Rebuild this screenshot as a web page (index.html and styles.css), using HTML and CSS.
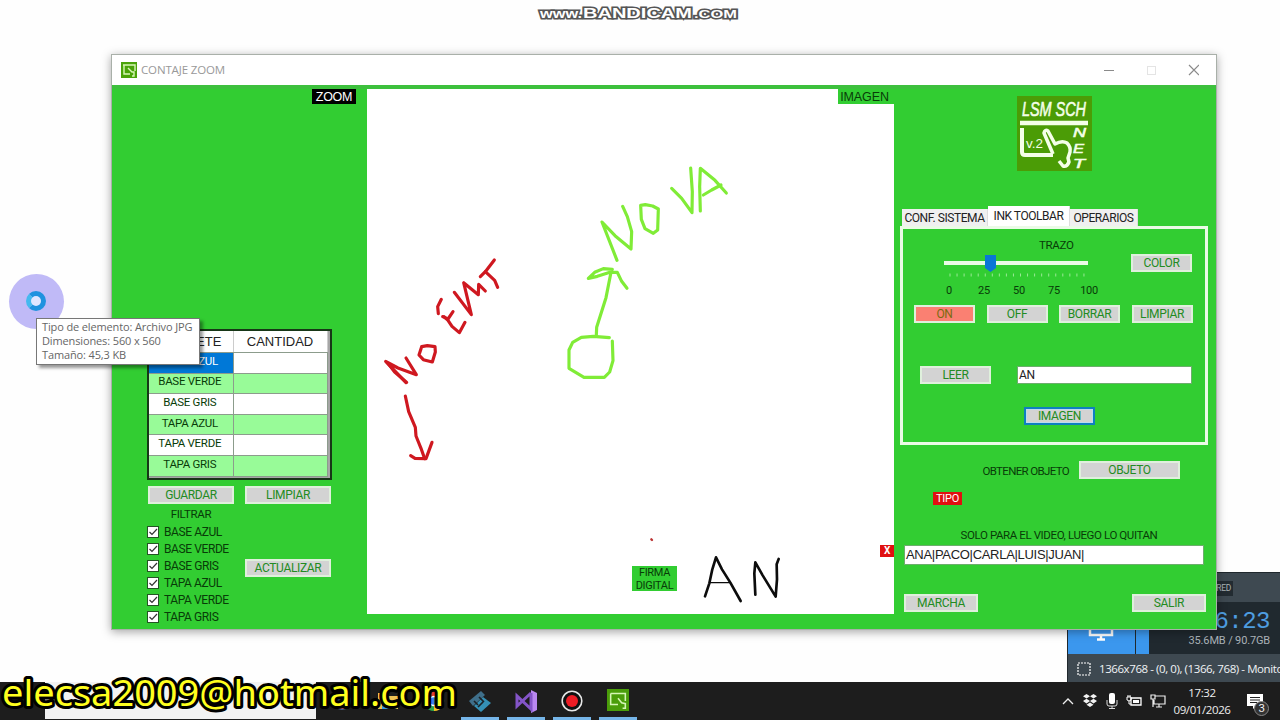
FILE: index.html
```html
<!DOCTYPE html>
<html lang="es">
<head>
  <meta charset="UTF-8" />
  <meta name="viewport" content="width=device-width, initial-scale=1.0" />
  <title>CONTAJE ZOOM</title>
  <link rel="stylesheet" href="styles.css">
</head>
<body>
  <div class="desktop">

    <svg class="watermark" width="210" height="26">
      <text x="5" y="18" font-size="13" textLength="42" lengthAdjust="spacingAndGlyphs">www.</text>
      <text x="48" y="18" font-size="15" textLength="109" lengthAdjust="spacingAndGlyphs">BANDICAM</text>
      <text x="159" y="18" font-size="11.5" textLength="43" lengthAdjust="spacingAndGlyphs">.COM</text>
    </svg>

    <!-- grabador -->
    <div class="recorder">
      <div class="rec-top"><span class="rec-badge">SHARED</span></div>
      <div class="rec-main">
        <div class="rec-blue">
          <svg width="28" height="20"><path d="M3 0v9h22V0M14 9v5M10 13.500h8" fill="none" stroke="#fff" stroke-width="2.500"/></svg>
        </div>
        <div class="rec-drop"></div>
        <div class="rec-info">
          <div class="rec-time">06:23</div>
          <div class="rec-size">35.6MB / 90.7GB</div>
        </div>
      </div>
      <div class="rec-status">
        <svg width="14" height="14"><rect x="1" y="1" width="12" height="12" fill="none" stroke="#fff" stroke-width="1.2" stroke-dasharray="2 1"/></svg>
        <span>1366x768 - (0, 0), (1366, 768) - Monitor</span>
      </div>
    </div>

    <div class="window">
      <div class="titlebar">
        <svg class="app-icon" width="16" height="16" viewBox="0 0 16 16">
          <rect width="16" height="16" fill="#4aa30a"/>
          <path d="M2 3h12v6M3 3v9h6M7 6l4 4h2v4h-2" fill="none" stroke="#d9f7b8" stroke-width="1.4"/>
        </svg>
        <span class="title">CONTAJE ZOOM</span>
        <svg class="controls" width="96" height="14" viewBox="0 0 96 14">
          <path d="M1 7.500h10" stroke="#8a8a8a"/>
          <rect x="44.5" y="3.500" width="8" height="8" fill="none" stroke="#e4e4e4"/>
          <path d="M86 2l10 10M96 2l-10 10" stroke="#8a8a8a" stroke-width="1.2"/>
        </svg>
      </div>

      <div class="content">
        <div class="left">
          <div class="zoom-tag">ZOOM</div>
          <div class="grid-box">
            <table class="grid">
              <tr><th>PAQUETE</th><th>CANTIDAD</th></tr>
              <tr><td class="selected">BASE AZUL</td><td></td></tr>
              <tr class="alt"><td>BASE VERDE</td><td></td></tr>
              <tr><td>BASE GRIS</td><td></td></tr>
              <tr class="alt"><td>TAPA AZUL</td><td></td></tr>
              <tr><td>TAPA VERDE</td><td></td></tr>
              <tr class="alt"><td>TAPA GRIS</td><td></td></tr>
            </table>
          </div>
          <div class="btn-row">
            <button>GUARDAR</button>
            <button>LIMPIAR</button>
          </div>
          <div class="filters">
            <div class="filter-list">
              <div class="filter-title">FILTRAR</div>
              <label><i class="check"><svg width="12" height="12"><path d="M2.5 6l2.5 2.5L10 3"/></svg></i>BASE AZUL</label>
              <label><i class="check"><svg width="12" height="12"><path d="M2.5 6l2.5 2.5L10 3"/></svg></i>BASE VERDE</label>
              <label><i class="check"><svg width="12" height="12"><path d="M2.5 6l2.5 2.5L10 3"/></svg></i>BASE GRIS</label>
              <label><i class="check"><svg width="12" height="12"><path d="M2.5 6l2.5 2.5L10 3"/></svg></i>TAPA AZUL</label>
              <label><i class="check"><svg width="12" height="12"><path d="M2.5 6l2.5 2.5L10 3"/></svg></i>TAPA VERDE</label>
              <label><i class="check"><svg width="12" height="12"><path d="M2.5 6l2.5 2.5L10 3"/></svg></i>TAPA GRIS</label>
            </div>
            <button>ACTUALIZAR</button>
          </div>
        </div>

        <div class="canvas">
          <!-- trazos a mano -->
          <svg class="ink" width="527" height="525">
            <g transform="translate(3 61) scale(.33333)">
              <g stroke="#cf1820" stroke-width="9.5">
                <polyline points="108,698 47,634 84,654 139,674 108,624"/>
                <polyline points="110,697 74,666 54,640"/>
                <polyline points="155,590 147,615 160,629 187,636 196,606 195,590 172,587 155,590"/>
                <polyline points="214,448 203,470 205,491"/>
                <polyline points="218,500 234,507 249,485"/>
                <polyline points="222,500 234,511 246,529 268,548 285,517"/>
                <polyline points="253,427 304,494 281,398 325,434 326,403 346,423"/>
                <polyline points="331,380 346,365 373,330"/>
                <polyline points="346,365 374,391 383,412"/>
                <polyline points="106,738 116,785 136,832 138,858 153,895 164,926"/>
                <polyline points="122,917 135,925 168,926 186,877"/>
              </g>
              <g stroke="#80ec37" stroke-width="9.5">
                <polyline points="741,331 696,216 735,257 783,297 785,245 772,200 758,169"/>
                <polyline points="826,164 812,166 814,208 825,236 850,250 863,240 865,177 848,168 826,164"/>
                <polyline points="905,115 935,145 966,188 967,125 962,54"/>
                <polyline points="991,183 989,110 991,55 1035,91 1069,129"/>
                <polyline points="1000,135 1025,120 1053,105"/>
                <polyline points="679,555 680,532 708,443 722,372"/>
                <polyline points="727,358 700,356 674,367 655,385 682,379 720,367 742,367 755,394 771,415"/>
                <polyline points="718,563 670,559 634,562 608,577 597,600 597,655 642,682 703,682 719,666 729,632 727,573"/>
              </g>
            </g>
            <g transform="translate(233 431) scale(.33333)" stroke="#0c0c0c" stroke-width="8">
              <polyline points="315,229 328,190 337,148 348,112 366,148 391,188 422,243"/>
              <polyline points="330,188 391,188" stroke-width="4"/>
              <polyline points="466,224 463,160 466,127 488,166 527,230 531,178 530,133 536,117"/>
              <polyline points="154,58 156,60" stroke="#b33" stroke-width="7"/>
            </g>
          </svg>
          <span class="image-tag">IMAGEN</span>
          <span class="sign-tag">FIRMA<br>DIGITAL</span>
          <span class="close-tag">X</span>
        </div>

        <div class="right">
          <svg class="logo" width="75" height="75" viewBox="0 0 75 75">
            <rect width="75" height="75" fill="#4b9c06" stroke="none"/>
            <text x="5" y="20" font-size="21" font-style="italic" class="logo-name" textLength="64" lengthAdjust="spacingAndGlyphs">LSM SCH</text>
            <path d="M3 27h68" stroke-width="4.5"/>
            <path d="M5 32v24q0 3 3 3h28" stroke-width="4"/>
            <path d="M36 58L27 37q1-4 4-2l7 13q7-4 12-1 4 4 3 9l-2 6 1 4q-2 5-6 4l-4-5" stroke-width="3.500" stroke-linejoin="round"/>
            <text x="9" y="52" font-size="12" textLength="17" lengthAdjust="spacingAndGlyphs">v.2</text>
            <g font-size="13" font-style="italic" class="logo-name">
              <text x="56" y="41" textLength="13" lengthAdjust="spacingAndGlyphs">N</text>
              <text x="56" y="57" textLength="11" lengthAdjust="spacingAndGlyphs">E</text>
              <text x="56" y="72" textLength="12" lengthAdjust="spacingAndGlyphs">T</text>
            </g>
          </svg>

          <div class="tabs">
            <span class="tab t1">CONF. SISTEMA</span>
            <span class="tab t2 active">INK TOOLBAR</span>
            <span class="tab t3">OPERARIOS</span>
          </div>
          <div class="tab-panel">
            <div class="stroke-row">
              <div class="slider">
                <div class="slider-title">TRAZO</div>
                <svg width="146" height="26">
                  <rect x="1" y="8" width="144" height="4" fill="#eafbe6"/>
                  <path d="M42 2h11v13l-5.500 4-5.500-4z" fill="#0a76d6"/>
                  <path d="M6.500 22h135" stroke="#9ae895" stroke-width="3" stroke-dasharray="1 6.050"/>
                </svg>
                <div class="scale"><span>0</span><span>25</span><span>50</span><span>75</span><span>100</span></div>
              </div>
              <button>COLOR</button>
            </div>
            <div class="tools">
              <button class="on">ON</button>
              <button>OFF</button>
              <button>BORRAR</button>
              <button>LIMPIAR</button>
            </div>
            <div class="read-row">
              <button>LEER</button>
              <div class="field">AN</div>
            </div>
            <button class="focus">IMAGEN</button>
          </div>

          <div class="object-row">
            <span>OBTENER OBJETO</span>
            <button>OBJETO</button>
          </div>
          <div class="type-tag">TIPO</div>
          <div class="note">SOLO PARA EL VIDEO, LUEGO LO QUITAN</div>
          <div class="field names">ANA|PACO|CARLA|LUIS|JUAN|</div>
          <div class="bottom-row">
            <button>MARCHA</button>
            <button>SALIR</button>
          </div>
        </div>
      </div>
    </div>

    <!-- cursor ocupado -->
    <div class="cursor"><div class="ring"></div></div>
    <div class="tooltip">Tipo de elemento: Archivo JPG<br>Dimensiones: 560 x 560<br>Tamaño: 45,3 KB</div>

    <div class="taskbar">
      <div class="search"></div>
      <div class="apps">
        <div class="app">
          <svg width="24" height="24" viewBox="0 0 24 24"><circle cx="12" cy="12" r="9" fill="#456aa0"/><path d="M4 15a9 9 0 0 0 16 0z" fill="#d8546a"/></svg>
        </div>
        <div class="app">
          <svg width="24" height="24" viewBox="0 0 24 24"><path d="M2 4h8l2 3h10v13H2z" fill="#f0c254"/><path d="M6 14h12v6H6z" fill="#3c9be0"/></svg>
        </div>
        <div class="app">
          <svg width="24" height="24" viewBox="0 0 24 24"><path d="M12 12L3.300 7a10 10 0 0 1 17.400 0z" fill="#e33b2e"/><path d="M12 12L3.300 7A10 10 0 0 0 12 22z" fill="#2fa84f"/><path d="M12 12l8.700-5A10 10 0 0 1 12 22z" fill="#f9c526"/><circle cx="12" cy="12" r="4.500" fill="#3b7ded" stroke="#fff" stroke-width="1.500"/></svg>
        </div>
        <div class="app open">
          <svg width="24" height="24" viewBox="0 0 24 24"><path d="M13 2l4 4-12 11-4-5z" fill="#3f6f8a"/><path d="M15 8l8 6-10 9-7-6z" fill="#3590b5"/><path d="M6 12l4 4M11 8l5 5M10 18l5-5" stroke="#1c2226" stroke-width="1.700"/></svg>
        </div>
        <div class="app open">
          <svg width="24" height="24" viewBox="0 0 24 24"><path d="M17 1l6 3v17l-6 3z" fill="#b987f0"/><path d="M17 4v16L3 7v10L17 4" fill="none" stroke="#8455c8" stroke-width="3"/></svg>
        </div>
        <div class="app open">
          <svg width="24" height="24" viewBox="0 0 24 24"><circle cx="12" cy="12" r="9.800" fill="#111" stroke="#e8e8e8" stroke-width="1.600"/><circle cx="12" cy="12" r="6" fill="#ee1c24"/></svg>
        </div>
        <div class="app open">
          <svg width="24" height="22" viewBox="0 0 24 24"><rect width="24" height="24" fill="#4a9d0a"/><path d="M4 5h16v8M4 5v12h8M12 10l4 5 4 1v5h-3" fill="none" stroke="#d5f5b5" stroke-width="1.700"/></svg>
        </div>
      </div>
      <div class="tray">
        <svg width="12" height="14"><path d="M1 10l5-5 5 5" fill="none" stroke="#eee" stroke-width="1.300"/></svg>
        <svg width="16" height="14" viewBox="0 0 16 14"><path d="M4.500 0L8 2.300 4.500 4.600 1 2.300zM11.500 0L15 2.300l-3.500 2.300L8 2.300zM4.500 4.800L8 7.100 4.500 9.400 1 7.100zM11.500 4.800L15 7.100l-3.500 2.300L8 7.100zM8 8.500l3.500 2.200L8 13l-3.500-2.300z" fill="#f2f2f2"/></svg>
        <svg width="12" height="16" viewBox="0 0 12 16"><rect x="3" width="6" height="11" rx="2" fill="#fff"/><path d="M1 7v4q0 2 2 2h6q2 0 2-2V7M6 13v3M3 15.500h6" fill="none" stroke="#ddd"/></svg>
        <svg width="16" height="14" viewBox="0 0 16 14"><path d="M5 4h10v7H5z" fill="none" stroke="#fff" stroke-width="1.300"/><path d="M7 6h6v3H7z" fill="#fff"/><path d="M1 3h4v3q-2 2-4 0zM2 3V1M4 3V1M3 7v3h2" fill="none" stroke="#fff"/></svg>
        <svg width="16" height="14" viewBox="0 0 16 14"><path d="M5 2h10v8H4V6M9 10v3M6 13h6M1 1h4v4H1zM3 5v8" fill="none" stroke="#eee" stroke-width="1.200"/></svg>
      </div>
      <div class="clock">17:32<br>09/01/2026</div>
      <div class="notify">
        <svg width="16" height="16" viewBox="0 0 16 16"><path d="M0 0h16v12H9l-3 3v-3H0z" fill="#fff"/><path d="M3 3.500h10M3 6h10M3 8.500h7" stroke="#222"/></svg>
        <span class="count">3</span>
      </div>
    </div>

    <svg class="email" width="470" height="60">
      <text x="2" y="46" textLength="455" lengthAdjust="spacingAndGlyphs">elecsa2009@hotmail.com</text>
    </svg>
  </div>
</body>
</html>
```
FILE: styles.css
```css
* {
  box-sizing: border-box;
}
body {
  margin: 0;
  font-family: Roboto, "Liberation Sans", sans-serif;
  font-size: 11.5px;
  letter-spacing: -0.3px;
  color: #083c08;
}
svg {
  display: block;
  flex: none;
}
.desktop {
  position: relative;
  width: 1280px;
  height: 720px;
  overflow: hidden;
  background: #fefefe;
}
.watermark {
  position: absolute;
  left: 535px;
  top: 0;
}
.watermark text {
  font-family: "Liberation Sans", sans-serif;
  font-weight: bold;
  letter-spacing: 0;
  fill: #fff;
  stroke: #555;
  stroke-width: 3px;
  paint-order: stroke;
}

/* ventana principal */
.window {
  position: absolute;
  left: 111px;
  top: 54px;
  width: 1106px;
  height: 576px;
  border: 1px solid #a9b0a9;
  background: #32cd32;
  box-shadow: 0 2px 9px rgba(0,0,0,0.35);
}
.titlebar {
  display: flex;
  align-items: center;
  height: 30px;
  padding: 0 17px 1px 9px;
  background: #fff;
}
.title {
  margin-left: 4px;
  flex: 1;
  font-family: "Open Sans", sans-serif;
  font-size: 11.5px;
  line-height: 16px;
  letter-spacing: -0.15px;
  color: #999;
}
.content {
  display: flex;
  height: 544px;
  border-top: 4px solid #3dc03d;
}
button {
  height: 18px;
  padding: 0;
  border: 2px solid #dff0dc;
  background: #d3d3d3;
  color: #228b22;
  font: 12px/14px Roboto, sans-serif;
  letter-spacing: -0.35px;
  white-space: nowrap;
}

/* columna izquierda */
.left {
  width: 255px;
  padding-left: 35px;
}
.zoom-tag {
  width: 44px;
  height: 15px;
  margin-left: 165px;
  background: #000;
  color: #fff;
  font: 12.5px/16px "Liberation Sans", sans-serif;
  text-align: center;
}
.grid-box {
  width: 185px;
  height: 151px;
  margin-top: 225px;
  border: 2px solid #173717;
  background: #a6a6a6;
}
.grid {
  width: 178px;
  table-layout: fixed;
  border-collapse: collapse;
  text-align: center;
  line-height: 15px;
}
.grid tr {
  height: 20.6px;
  background: #fff;
}
.grid th, .grid td {
  padding: 0 2px 3px 0;
  border-right: 1px solid #8c9c8c;
  border-bottom: 1px solid #8c9c8c;
}
.grid th {
  width: 84px;
  padding: 0;
  border-right-color: #ccc;
  font: 13px/21px "Liberation Sans", sans-serif;
  letter-spacing: 0;
  color: #222;
}
.grid th + th {
  width: 94px;
}
.grid .alt {
  background: #98fb98;
}
.grid .selected {
  background: #0078d7;
  color: #fff;
}
.btn-row {
  display: flex;
  gap: 11px;
  margin: 6px 0 0 1px;
}
.btn-row button, .filters button {
  width: 86px;
}
.filters {
  display: flex;
  align-items: flex-start;
}
.filter-list {
  width: 98px;
}
.filter-title {
  width: 88px;
  margin-top: 1px;
  line-height: 18px;
  text-align: center;
}
.filter-list label {
  display: flex;
  align-items: center;
  height: 17.1px;
  font-size: 12px;
  letter-spacing: -0.4px;
}
.check {
  width: 12px;
  height: 12px;
  margin-right: 5px;
  border: 1px solid #245524;
  background: #fff;
}
.check svg {
  margin: -1px;
  fill: none;
  stroke: #333;
  stroke-width: 1.2;
}
.filters button {
  margin-top: 55px;
}

/* lienzo */
.canvas {
  position: relative;
  width: 527px;
  height: 525px;
  background: #fff;
}
.ink {
  fill: none;
  stroke-linecap: round;
  stroke-linejoin: round;
}
.image-tag, .sign-tag, .close-tag {
  position: absolute;
  text-align: center;
}
.image-tag {
  right: 0;
  top: 0;
  width: 56px;
  height: 15px;
  padding-right: 3px;
  background: #32cd32;
  font: 12.5px/16px "Liberation Sans", sans-serif;
  letter-spacing: -0.1px;
}
.sign-tag {
  left: 265px;
  top: 477px;
  width: 45px;
  height: 25px;
  padding-top: 1px;
  background: #32cd32;
  font-size: 11px;
  line-height: 12.5px;
}
.close-tag {
  right: 0;
  top: 456px;
  width: 14px;
  height: 12px;
  background: #e01010;
  color: #fff;
  font-size: 10px;
  font-weight: bold;
  line-height: 12px;
}

/* columna derecha */
.right {
  width: 322px;
}
.logo {
  margin: 7px 0 0 123px;
  fill: none;
  stroke: #f4ffe8;
}
.logo text {
  font-family: "Liberation Sans", sans-serif;
  letter-spacing: 0;
  fill: #f4ffe8;
  stroke: none;
}
.logo .logo-name, .logo .logo-name text {
  stroke: #f4ffe8;
  stroke-width: 0.6px;
}
.tabs {
  display: flex;
  align-items: flex-end;
  height: 20px;
  margin: 35px 0 0 8px;
}
.tab {
  height: 17px;
  border-right: 1px solid #ddd;
  background: #f0f0f0;
  color: #222;
  font-size: 12px;
  line-height: 18px;
  letter-spacing: -0.45px;
  text-align: center;
  white-space: nowrap;
}
.t1 { width: 86px; }
.t2 { width: 82px; }
.t3 { width: 68px; }
.tab.active {
  height: 20px;
  line-height: 21px;
  background: #fff;
}
.tab-panel {
  width: 308px;
  height: 219px;
  margin-left: 6px;
  border: 3px solid #eafbe6;
}
.stroke-row {
  display: flex;
  padding: 8px 0 0 40px;
}
.slider {
  width: 188px;
}
.slider-title {
  padding-left: 96px;
  line-height: 16px;
}
.scale {
  display: flex;
  margin-top: 5px;
  line-height: 14px;
  font-size: 11px;
}
.scale span {
  width: 36px;
  margin-left: -1px;
  text-align: center;
}
.scale span:first-child {
  margin-left: -12px;
}
.stroke-row button {
  width: 61px;
  margin-top: 17px;
}
.tools {
  display: flex;
  gap: 11.5px;
  margin: 7px 0 0 11px;
}
.tools button {
  width: 61px;
}
.tools .on {
  background: #fa8072;
  color: #7a6a10;
}
.read-row {
  display: flex;
  gap: 26px;
  margin: 43px 0 0 17px;
}
.read-row button {
  width: 71px;
}
.field {
  width: 175px;
  height: 18px;
  padding-left: 1px;
  border: 1px solid #6cae6c;
  background: #fff;
  color: #222;
  font-size: 12px;
  line-height: 16px;
}
.focus {
  display: block;
  width: 71px;
  margin: 23px 0 0 121px;
  border-color: #0f7fc0;
  box-shadow: inset 0 0 0 1px #bcdcf0;
}
.object-row {
  display: flex;
  align-items: center;
  justify-content: flex-end;
  gap: 10px;
  margin: 16px 36px 0 0;
}
.object-row button {
  width: 101px;
}
.object-row span {
  padding-top: 2px;
  letter-spacing: -0.65px;
}
.type-tag {
  width: 29px;
  height: 13px;
  margin: 13px 0 0 39px;
  background: #e01010;
  color: #fff;
  font-size: 11px;
  line-height: 13px;
  text-align: center;
}
.note {
  margin: 22px 0 0 8px;
  width: 314px;
  line-height: 16px;
  text-align: center;
  letter-spacing: -0.4px;
}
.names {
  width: 300px;
  height: 20px;
  margin: 2px 0 0 10px;
  padding-left: 1px;
  font: 13px/18px "Liberation Sans", sans-serif;
  letter-spacing: -0.3px;
}
.bottom-row {
  display: flex;
  justify-content: space-between;
  margin: 29px 10px 0;
}
.bottom-row button {
  width: 74px;
}

/* grabador de pantalla */
.recorder {
  position: absolute;
  left: 1067px;
  top: 572px;
  width: 213px;
  height: 111px;
  overflow: hidden;
  background: #3e4951;
  border-left: 1px solid #20282d;
  color: #aab2b8;
}
.rec-top {
  height: 30px;
  padding: 8px 47px 0 0;
  border-top: 1px solid #20282d;
  text-align: right;
}
.rec-badge {
  display: inline-block;
  height: 15px;
  padding: 0 2px 0 4px;
  background: #222b31;
  font-size: 8.5px;
  line-height: 14px;
  vertical-align: top;
}
.rec-main {
  display: flex;
  height: 52px;
  background: #20292f;
}
.rec-blue {
  width: 67px;
  padding: 24px 0 0 19px;
  background: #3b97ee;
}
.rec-drop {
  width: 13px;
  margin-left: 1px;
  background: #3b97ee;
}
.rec-info {
  flex: 1;
  padding: 9px 10px 0 0;
  text-align: right;
}
.rec-time {
  font: 24px/21px "Liberation Mono", monospace;
  letter-spacing: -0.5px;
  color: #4e9de0;
}
.rec-size {
  font-size: 11px;
  line-height: 18px;
  letter-spacing: -0.15px;
}
.rec-status {
  display: flex;
  align-items: center;
  gap: 8px;
  height: 29px;
  padding-left: 9px;
  font-family: "Open Sans", sans-serif;
  font-size: 11.5px;
  letter-spacing: -0.42px;
  white-space: nowrap;
  color: #f0f3f5;
}

.cursor {
  position: absolute;
  left: 9px;
  top: 274px;
  width: 55px;
  height: 55px;
  padding: 17px;
  border-radius: 50%;
  background: #c0baf7;
}
.ring {
  width: 20px;
  height: 20px;
  border: 5px solid #2092df;
  border-left-color: #45b9ef;
  border-radius: 50%;
  background: #e1e6ff;
}
.tooltip {
  position: absolute;
  left: 36px;
  top: 318px;
  width: 164px;
  height: 47px;
  padding: 1px 5px;
  border: 1px solid #777;
  background: #fff;
  box-shadow: 3px 3px 3px rgba(0,0,0,0.4);
  color: #666;
  font: 11px/14px "Open Sans", sans-serif;
  letter-spacing: -0.13px;
  white-space: nowrap;
}

/* barra de tareas */
.taskbar {
  position: absolute;
  left: 0;
  bottom: 0;
  display: flex;
  width: 1280px;
  height: 38px;
  background: #1d1d1d;
  color: #eee;
}
.search {
  width: 271px;
  height: 37px;
  margin-left: 45px;
  background: #f2f2f2;
}
.apps {
  display: flex;
  gap: 8px;
  margin-left: 7px;
}
.app {
  display: flex;
  justify-content: center;
  width: 38px;
  height: 38px;
  padding-top: 7px;
}
.app.open {
  border-bottom: 3px solid #75b5e8;
}
.tray {
  display: flex;
  align-items: center;
  gap: 8px;
  margin-left: 425px;
}
.clock {
  width: 68px;
  margin-left: 2px;
  padding-top: 2px;
  font: 11.5px/17px "Open Sans", sans-serif;
  letter-spacing: -0.4px;
  text-align: center;
}
.notify {
  position: relative;
  margin: 12px 0 0 11px;
}
.count {
  position: absolute;
  left: 7px;
  top: 7px;
  width: 15px;
  height: 15px;
  border: 1px solid #888;
  border-radius: 50%;
  background: #333;
  line-height: 13px;
  text-align: center;
}
.email {
  position: absolute;
  left: 0;
  top: 660px;
}
.email text {
  font-family: "Noto Sans", "Open Sans", sans-serif;
  font-size: 37px;
  letter-spacing: 0;
  fill: #ffff1e;
  stroke: #000;
  stroke-width: 6px;
  stroke-linejoin: round;
  paint-order: stroke;
}
```
